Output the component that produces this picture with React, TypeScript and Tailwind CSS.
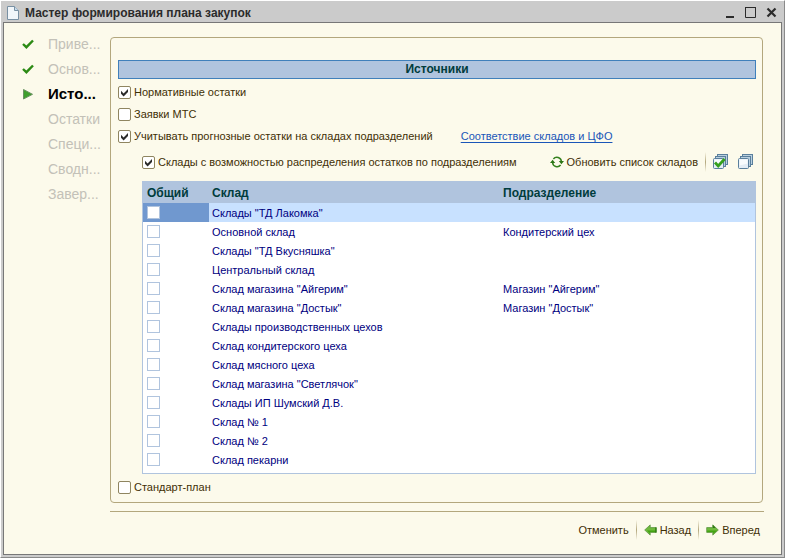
import { useState } from "react";
import type { ReactNode } from "react";

const steps = [
  { label: "Приве...", state: "done" },
  { label: "Основ...", state: "done" },
  { label: "Исто...", state: "current" },
  { label: "Остатки", state: "next" },
  { label: "Специ...", state: "next" },
  { label: "Сводн...", state: "next" },
  { label: "Завер...", state: "next" },
];

const warehouses = [
  { name: 'Склады "ТД Лакомка"', unit: "" },
  { name: "Основной склад", unit: "Кондитерский цех" },
  { name: 'Склады "ТД Вкусняшка"', unit: "" },
  { name: "Центральный склад", unit: "" },
  { name: 'Склад магазина "Айгерим"', unit: 'Магазин "Айгерим"' },
  { name: 'Склад магазина "Достык"', unit: 'Магазин "Достык"' },
  { name: "Склады производственных цехов", unit: "" },
  { name: "Склад кондитерского цеха", unit: "" },
  { name: "Склад мясного цеха", unit: "" },
  { name: 'Склад магазина "Светлячок"', unit: "" },
  { name: "Склады ИП Шумский Д.В.", unit: "" },
  { name: "Склад № 1", unit: "" },
  { name: "Склад № 2", unit: "" },
  { name: "Склад пекарни", unit: "" },
];

function StepMark({ state }: { state: string }) {
  if (state === "done") {
    return (
      <svg width="12" height="10" viewBox="0 0 12 10" aria-hidden="true">
        <path d="M1 5l3.4 3.2L11 1.5" fill="none" stroke="#2c8a14" strokeWidth="2.4" />
      </svg>
    );
  }
  if (state === "current") {
    return (
      <svg width="12" height="12" viewBox="0 0 12 12" aria-hidden="true">
        <path d="M1.5 1.5v9.5l9-4.7z" fill="#3f9f2c" stroke="#6b9163" />
      </svg>
    );
  }
  return null;
}

function Check({ label, initial = false }: { label: string; initial?: boolean }) {
  const [checked, setChecked] = useState(initial);
  return (
    <label className="flex items-center gap-[3px]">
      <span className="relative size-[13px] shrink-0">
        <input
          type="checkbox"
          checked={checked}
          onChange={() => setChecked(!checked)}
          className="block size-[13px] appearance-none rounded-[2px] border border-[#8f8560] bg-white"
        />
        {checked && (
          <svg className="pointer-events-none absolute inset-0" width="13" height="13" viewBox="0 0 13 13" aria-hidden="true">
            <path d="M3 4.8v3l2.6 2.6L10 6V3L5.6 7.4z" fill="#2b2b2b" />
          </svg>
        )}
      </span>
      {label}
    </label>
  );
}

function Divider() {
  return <span className="h-5 w-px bg-linear-to-b from-[#fcfaeb] via-[#b3a77d] to-[#fcfaeb]" />;
}

function Stack({ checked = false }: { checked?: boolean }) {
  return (
    <svg width="16" height="16" viewBox="0 0 16 16" aria-hidden="true">
      <g fill="#b9cfdf" stroke="#5a7f9c">
        <rect x="4.5" y="0.5" width="10" height="10" />
        <rect x="2.5" y="2.5" width="10" height="10" />
      </g>
      <rect x="0.5" y="4.5" width="10" height="10" rx="1" fill="#e4edf5" stroke="#5a7f9c" />
      <path d="M1.5 5.5h8v4l-8 2z" fill="#f8fbfd" />
      {checked && <path d="M2 8.5l3.2 3.4L11.6 5" fill="none" stroke="#35a01c" strokeWidth="2.8" />}
    </svg>
  );
}

function Arrow({ back = false }: { back?: boolean }) {
  return (
    <svg width="13" height="12" viewBox="0 0 13 12" aria-hidden="true">
      <path
        d={back ? "M.7 6L6.2 .9v2.7h6.1v4.8H6.2v2.7z" : "M12.3 6L6.8 .9v2.7H.7v4.8h6.1v2.7z"}
        fill="#6fba3c"
        stroke="#5a9440"
        strokeWidth="0.8"
      />
      <path d={back ? "M3 6.5h8.8V8H5.8v1.5z" : "M1.2 6.5h10L7.2 9.7V8h-6z"} fill="#43a312" />
      {back && <path d="M11.2 3.6h1.2v4.8h-1.2z" fill="#2f7a14" />}
      {!back && <path d="M6.8 1v3h2.8z" fill="#2f7a14" />}
    </svg>
  );
}

function TextButton({ children }: { children: ReactNode }) {
  return <button type="button" className="flex items-center gap-[3px] whitespace-nowrap">{children}</button>;
}

export default function App() {
  return (
    <div className="flex min-h-screen flex-col border-t border-r border-b border-l border-t-white border-r-[#8a8a8a] border-b-[#8a8a8a] border-l-white bg-[#cbcbcb] pr-[2px] pb-[2px] pl-[2px] font-['Liberation_Sans',Arial,sans-serif] text-[11px] leading-[14px] text-[#3f2f05]">
      <header className="flex h-[21px] items-center pt-[2px] pr-[5px] pl-1 text-[#2b2b2b]">
        <svg width="12" height="14" viewBox="0 0 12 14" aria-hidden="true">
          <path d="M.5.5h7l4 4v9H.5z" fill="#f1f6fa" stroke="#7890a3" />
          <path d="M7.5.5v4h4" fill="#c8dcec" stroke="#7890a3" />
        </svg>
        <h1 className="flex-1 pl-[6px] text-[12px] font-bold">Мастер формирования плана закупок</h1>
        <div className="flex gap-[10px]">
          <button type="button" aria-label="Свернуть">
            <svg width="10" height="11" viewBox="0 0 10 11"><path d="M1 9h8v2H1z" fill="#2b2b2b" /></svg>
          </button>
          <button type="button" aria-label="Развернуть">
            <svg width="11" height="11" viewBox="0 0 11 11"><path d="M.5 1v9.5h10V1M0 .5h11" fill="none" stroke="#2b2b2b" /></svg>
          </button>
          <button type="button" aria-label="Закрыть">
            <svg width="11" height="11" viewBox="0 0 11 11"><path d="M1.5 1.5l8 8M9.5 1.5l-8 8" stroke="#2b2b2b" strokeWidth="2.2" /></svg>
          </button>
        </div>
      </header>

      <div className="flex flex-1 border border-[#777] bg-[#fcfaeb]">
        <nav className="w-[106px] shrink-0 pt-2 pl-[18px]">
          <ol>
            {steps.map((s) => (
              <li
                key={s.label}
                aria-current={s.state === "current" ? "step" : undefined}
                className={`flex h-[25px] items-center whitespace-nowrap ${s.state === "current" ? "text-[15px] font-bold text-black" : "text-[14px] text-[#c3c1b8]"}`}
              >
                <span className="w-[26px] shrink-0"><StepMark state={s.state} /></span>
                {s.label}
              </li>
            ))}
          </ol>
        </nav>

        <main className="flex min-w-0 flex-1 flex-col pt-[14px] pr-[17px] pb-[14px]">
          <section className="mr-px flex flex-1 flex-col rounded-[4px] border border-[#b3a77d] pt-[22px] pr-[6px] pb-[8px] pl-[7px]">
            <h2 className="border border-[#4080bb] bg-[#b0c4de] text-center text-[12px] leading-[17px] font-bold text-[#003c3c]">
              Источники
            </h2>
            <div className="mt-[2px] flex h-[22px] items-center"><Check label="Нормативные остатки" initial /></div>
            <div className="flex h-[22px] items-center"><Check label="Заявки МТС" /></div>
            <div className="flex h-[22px] items-center gap-7">
              <Check label="Учитывать прогнозные остатки на складах подразделений" initial />
              <a href="#mapping" className="text-[#1a56b8] underline underline-offset-2">Соответствие складов и ЦФО</a>
            </div>
            <div className="mb-1 flex h-[30px] items-center justify-between pr-[2px] pl-6">
              <Check label="Склады с возможностью распределения остатков по подразделениям" initial />
              <div className="flex items-center gap-[7px]">
                <TextButton>
                  <svg width="14" height="12" viewBox="0 0 14 12" aria-hidden="true">
                    <path d="M3.4 3A4.5 4.5 0 0 1 11.4 5.5M10.6 9A4.5 4.5 0 0 1 2.6 6.5" fill="none" stroke="#35801d" strokeWidth="1.5" />
                    <path d="M8.8 5h5.2l-2.6 3.2zM0 7h5.2L2.6 3.8z" fill="#2c7516" />
                  </svg>
                  Обновить список складов
                </TextButton>
                <Divider />
                <button type="button" aria-label="Установить все флажки"><Stack checked /></button>
                <button type="button" aria-label="Снять все флажки" className="pl-[2px]"><Stack /></button>
              </div>
            </div>
            <div className="ml-6 flex-1 border border-[#b0c4de] bg-white">
              <table className="w-full table-fixed border-collapse text-left text-[#000080]">
                <thead>
                  <tr className="h-[21px] bg-[#b0c4de] text-[12px] text-[#003c3c]">
                    <th className="w-[66px] p-0 pl-1">Общий</th>
                    <th className="w-[291px] p-0 pl-[3px]">Склад</th>
                    <th className="p-0 pl-[3px]">Подразделение</th>
                  </tr>
                </thead>
                <tbody>
                  {warehouses.map((w, i) => (
                    <tr key={w.name} className={`h-[19px] ${i === 0 ? "bg-[#c8e1ff]" : ""}`}>
                      <td className={`p-0 pl-1 ${i === 0 ? "bg-[#7098cf]" : ""}`}>
                        <input
                          type="checkbox"
                          aria-label={w.name}
                          className="block size-[13px] appearance-none border border-[#b0c4de] bg-white checked:bg-[#7098cf]"
                        />
                      </td>
                      <td className="p-0 pl-[3px]">{w.name}</td>
                      <td className="p-0 pl-[3px]">{w.unit}</td>
                    </tr>
                  ))}
                </tbody>
              </table>
            </div>
            <div className="mt-[6px] flex"><Check label="Стандарт-план" /></div>
          </section>

          <footer className="mt-2 flex items-center justify-end gap-[7px] border-t border-[#b3a77d] pt-[8px] pr-1">
            <TextButton>Отменить</TextButton>
            <Divider />
            <TextButton><Arrow back />Назад</TextButton>
            <Divider />
            <TextButton><Arrow />Вперед</TextButton>
          </footer>
        </main>
      </div>
    </div>
  );
}
